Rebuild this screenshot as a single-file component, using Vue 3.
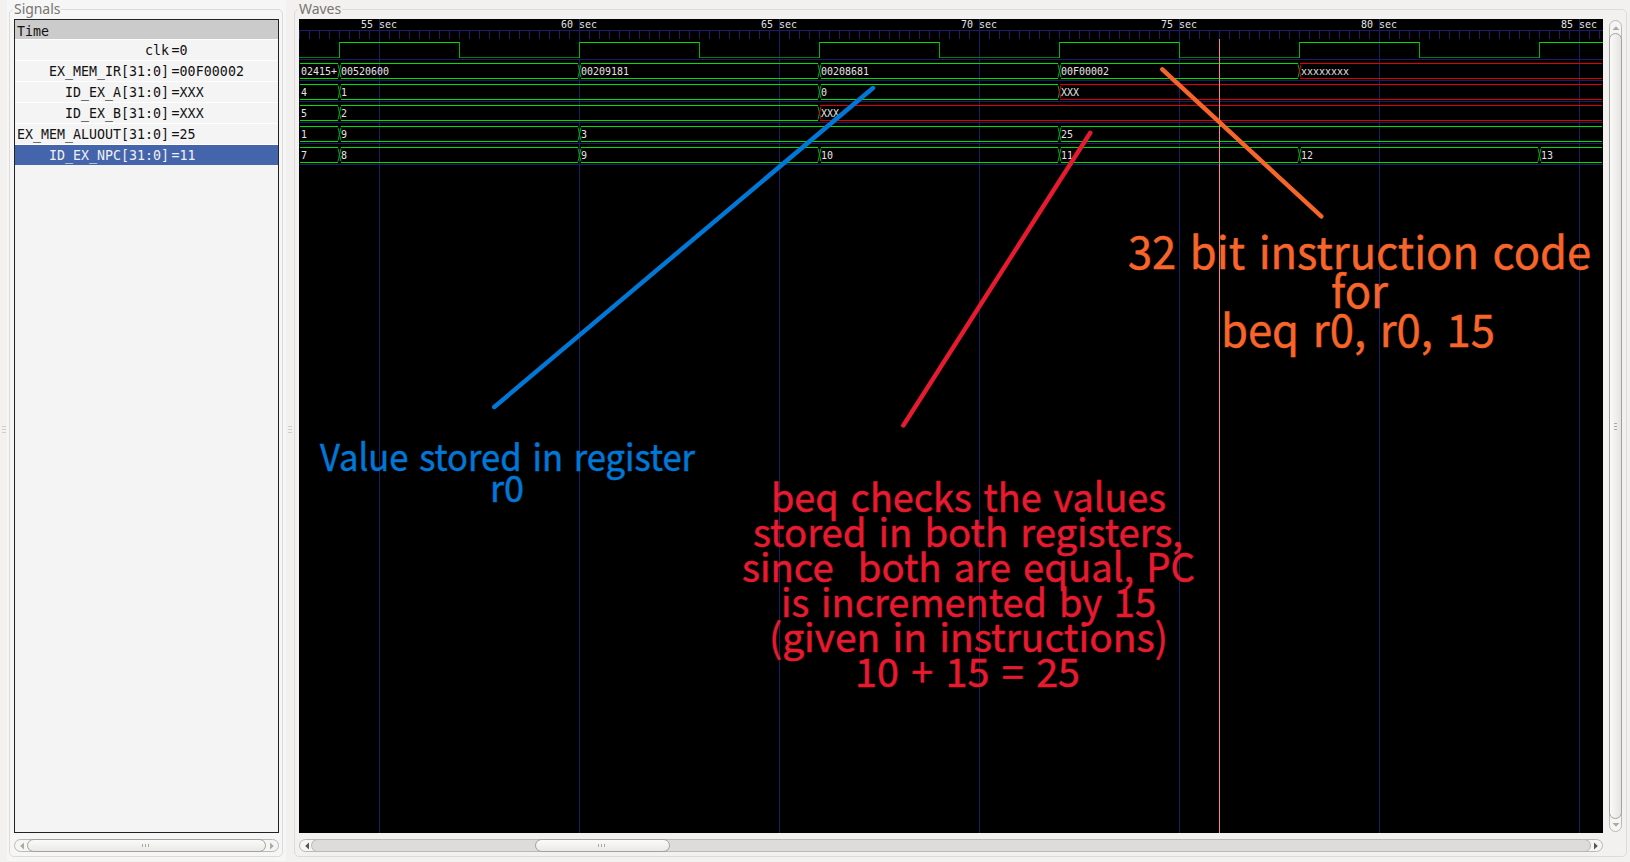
<script setup>
const signals = [
  { name: 'clk', value: '=0' },
  { name: 'EX_MEM_IR[31:0]', value: '=00F00002' },
  { name: 'ID_EX_A[31:0]', value: '=XXX' },
  { name: 'ID_EX_B[31:0]', value: '=XXX' },
  { name: 'EX_MEM_ALUOUT[31:0]', value: '=25' },
  { name: 'ID_EX_NPC[31:0]', value: '=11', selected: true },
]

const LEFT = 299
const RIGHT = 1603
const majors = [55, 60, 65, 70, 75, 80, 85].map((t) => ({ t, x: 379 + (t - 55) * 40 }))
const ticks = Array.from({ length: 131 }, (_, i) => LEFT + i * 10)
const rules = [59, 80, 101, 122, 143, 164]

const clockEdges = [339, 459, 579, 699, 819, 939, 1059, 1179, 1299, 1419, 1539]
const clock = [LEFT, ...clockEdges].map((x, i) => ({
  x1: x,
  x2: clockEdges[i] ?? RIGHT,
  high: i % 2 === 1,
}))

const buses = [
  [[LEFT, '02415+'], [339, '00520600'], [579, '00209181'], [819, '00208681'], [1059, '00F00002'], [1299, 'xxxxxxxx', true]],
  [[LEFT, '4'], [339, '1'], [819, '0'], [1059, 'XXX', true]],
  [[LEFT, '5'], [339, '2'], [819, 'XXX', true]],
  [[LEFT, '1'], [339, '9'], [579, '3'], [1059, '25']],
  [[LEFT, '7'], [339, '8'], [579, '9'], [819, '10'], [1059, '11'], [1299, '12'], [1539, '13']],
]
const segments = buses.flatMap((bus, row) =>
  bus.map(([x, label, unknown], i) => {
    const first = i === 0
    const last = i === bus.length - 1
    const start = first ? x + 1 : x + (unknown ? 1 : 2)
    const end = last ? RIGHT - 1 : bus[i + 1][0] - 1
    const top = 63.5 + row * 21
    const mid = top + 7.5
    const bottom = top + 15
    let edge = ''
    if (!first) edge += `M${x + 2} ${top + 1}L${x + 0.5} ${mid}L${x + 2} ${bottom - 1}`
    if (!last) edge += `M${end} ${top + 1}L${end + 1.5} ${mid}L${end} ${bottom - 1}`
    return { start, end, top, bottom, label, unknown, edge, tx: x + 2, ty: top + 11.5 }
  })
)

const notes = [
  {
    color: '#0078d7', size: 37, line: [494.3, 407, 873, 88],
    rows: [
      ['Value stored in register', 320, 375, 470.5],
      ['r0', 490, 34, 501.5],
    ],
  },
  {
    color: '#e81a2f', size: 39.5, line: [903.3, 425.5, 1090.3, 132.8],
    rows: [
      ['beq checks the values', 771, 395, 512],
      ['stored in both registers,', 753, 430, 547],
      ['since\u00a0 both are equal, PC', 742, 453, 582],
      ['is incremented by 15', 781, 375, 617],
      ['(given in instructions)', 769, 399, 652],
      ['10 + 15 = 25', 855, 225, 687],
    ],
  },
  {
    color: '#f7652a', size: 44.5, line: [1162.3, 69.3, 1321.3, 216.4],
    rows: [
      ['32 bit instruction code', 1128, 463, 269],
      ['for', 1331, 57, 308],
      ['beq r0, r0, 15', 1221, 274, 347],
    ],
  },
]
</script>

<template>
  <main class="app">
    <div class="handle"><i v-for="n in 3" :key="n"></i></div>
    <section class="pane signals">
      <div class="group">
        <h2 class="title">Signals</h2>
        <div class="list">
          <div class="head">Time</div>
          <div v-for="s in signals" :key="s.name" class="row" :class="{ selected: s.selected }">
            <span class="name">{{ s.name }}</span><span class="value">{{ s.value }}</span>
          </div>
        </div>
        <div class="hbar">
          <svg class="arrow faint" viewBox="0 0 12 12"><path d="M9 2.5v7L5.2 6z" /></svg>
          <div class="thumb full"><i v-for="n in 3" :key="n"></i></div>
          <svg class="arrow faint" viewBox="0 0 12 12"><path d="M4 2.5v7L7.8 6z" /></svg>
        </div>
      </div>
    </section>
    <div class="handle"><i v-for="n in 3" :key="n"></i></div>
    <section class="pane waves">
      <div class="group">
        <h2 class="title">Waves</h2>
        <div class="body">
          <svg class="canvas" viewBox="299 19 1304 814" width="1304" height="814">
            <rect x="299" y="19" width="1304" height="814" fill="#000" />
            <g shape-rendering="crispEdges">
              <rect v-for="m in majors" :key="m.t" :x="m.x" y="19" width="1" height="814" class="grid" />
              <rect x="299" y="30" width="1304" height="1" class="grid" />
              <rect v-for="x in ticks" :key="x" :x="x" y="31" width="1" height="8" class="grid" />
              <rect v-for="y in rules" :key="y" x="299" :y="y" width="1304" height="1" class="grid" />
              <rect v-for="c in clock" :key="c.x1" :x="c.x1" :y="c.high ? 42 : 57" :width="c.x2 - c.x1" height="1" :class="c.high ? 'high' : 'low'" />
              <rect v-for="x in clockEdges" :key="x" :x="x" y="42" width="1" height="16" class="edge" />
            </g>
            <g v-for="(s, i) in segments" :key="i" :class="s.unknown ? 'bad' : 'good'">
              <path :d="`M${s.start} ${s.top}H${s.end}M${s.start} ${s.bottom}H${s.end}`" />
              <path :d="s.edge" class="cross" />
              <text :x="s.tx" :y="s.ty" class="mono">{{ s.label }}</text>
            </g>
            <text v-for="m in majors" :key="m.t" :x="m.x - 18" y="28" class="mono">{{ m.t }} sec</text>
            <rect x="1219" y="39" width="1" height="794" fill="#f78383" />
            <g v-for="n in notes" :key="n.color">
              <line :x1="n.line[0]" :y1="n.line[1]" :x2="n.line[2]" :y2="n.line[3]" :stroke="n.color" stroke-width="4.4" stroke-linecap="round" />
              <text v-for="r in n.rows" :key="r[0]" class="note" :x="r[1]" :y="r[3]" :textLength="r[2]" lengthAdjust="spacingAndGlyphs" :font-size="n.size" :fill="n.color" :stroke="n.color">{{ r[0] }}</text>
            </g>
          </svg>
          <div class="vbar">
            <svg class="arrow faint" viewBox="0 0 12 12"><path d="M2.5 9h7L6 5.2z" /></svg>
            <div class="thumb tall"><i v-for="n in 3" :key="n"></i></div>
            <svg class="arrow faint" viewBox="0 0 12 12"><path d="M2.5 4h7L6 7.8z" /></svg>
          </div>
        </div>
        <div class="hbar wide">
          <svg class="arrow" viewBox="0 0 12 12"><path d="M9 2.5v7L5.2 6z" /></svg>
          <div class="trough"><div class="thumb"><i v-for="n in 3" :key="n"></i></div></div>
          <svg class="arrow" viewBox="0 0 12 12"><path d="M4 2.5v7L7.8 6z" /></svg>
        </div>
      </div>
    </section>
  </main>
</template>

<style>
body { margin: 0; background: #f2f1f0; }
</style>

<style scoped>
.app { display: flex; width: 1630px; height: 862px; overflow: hidden; background: #f2f1f0; font-family: "Noto Sans", sans-serif; }
.handle { box-sizing: border-box; width: 7px; padding-bottom: 4px; flex: none; display: flex; flex-direction: column; align-items: center; justify-content: center; gap: 2px; }
.handle i { width: 4px; height: 1px; background: #cfcecc; }
.pane { box-sizing: border-box; height: 861px; padding-top: 9px; flex: none; }
.signals { width: 279px; background: #f6f6f6; padding-left: 2px; }
.waves { width: 1337px; padding-left: 1px; }
.group { box-sizing: border-box; height: 848px; border: 1px solid #dcdbda; border-radius: 5px; padding: 9px 4px 0; }
.signals .group { width: 274px; }
.waves .group { width: 1333px; }
.title { margin: -19px 0 0 -1px; width: max-content; height: 19px; padding: 0 1px; font-size: 14px; line-height: 17px; font-weight: 400; color: #77746f; letter-spacing: -0.05px; background: #f2f1f0; }
.signals .title { background: #f6f6f6; }
.list { box-sizing: border-box; width: 265px; height: 814px; border: 1px solid #222; background: #f4f4f4; font: 13.29px/20px "DejaVu Sans Mono", monospace; color: #111; }
.head { height: 19px; line-height: 23px; padding-left: 2px; background: #cbcbcb; }
.row { box-sizing: border-box; height: 21px; border-top: 1px solid #fff; display: flex; white-space: pre; line-height: 21px; }
.row .name { width: 154px; margin-right: 2px; text-align: right; }
.row .value { letter-spacing: 0.06px; padding-left: 0.5px; }
.row.selected { background: #4464ac; color: #f0f0f5; }
.body { display: flex; gap: 6px; height: 814px; }
.canvas { display: block; flex: none; }
.grid { fill: #1c1c68; }
.high { fill: #00e000; }
.low { fill: #008000; }
.edge { fill: #00b800; }
.good path { stroke: #00e000; fill: none; }
.bad path { stroke: #e00000; fill: none; }
.good .cross { stroke: #00a800; }
.mono { font: 9.967px "DejaVu Sans Mono", monospace; fill: #e4e4e4; stroke: none; white-space: pre; }
.note { font-family: "Noto Sans CJK SC", sans-serif; white-space: pre; word-spacing: 0.09em; stroke-width: 0.5px; }
.hbar { box-sizing: border-box; width: 265px; height: 13px; margin-top: 6px; border: 1px solid #bbb9b6; border-radius: 7px; display: flex; align-items: center; background: #f5f5f4; }
.hbar.wide { width: 1304px; }
.arrow { width: 12px; height: 12px; flex: none; fill: #555; }
.faint { fill: #aaa9a6; }
.trough { flex: 1; height: 11px; border-radius: 6px; background: #dddcda; box-shadow: 0 0 0 1px #bbb9b6; padding-left: 223px; }
.thumb { box-sizing: border-box; width: 135px; height: 13px; margin: -1px 0; border: 1px solid #a3a19e; border-radius: 7px; background: linear-gradient(#fafafa, #eae9e7); display: flex; align-items: center; justify-content: center; gap: 2px; }
.thumb i { width: 1px; height: 3px; background: #aaa8a5; }
.hbar .thumb { padding-right: 2px; }
.full { flex: 1; width: auto; }
.vbar { box-sizing: border-box; width: 13px; height: 812px; margin-top: 1px; border: 1px solid #bbb9b6; border-radius: 7px; background: #f5f5f4; display: flex; flex-direction: column; align-items: center; }
.tall { flex: 1; width: 13px; height: auto; margin: 0 -1px; background: linear-gradient(90deg, #fafafa, #e4e3e1); flex-direction: column; }
.tall i { width: 3px; height: 1px; }
</style>
